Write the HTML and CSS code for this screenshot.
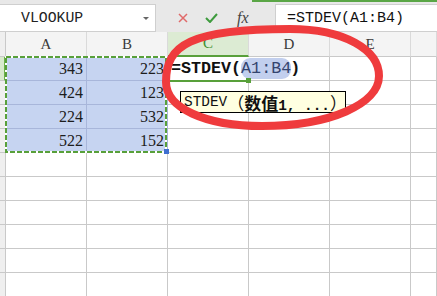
FILE: index.html
```html
<!DOCTYPE html>
<html>
<head>
<meta charset="utf-8">
<link rel="stylesheet" href="styles.css">
</head>
<body>
<div class="app">
  <div class="toolbar">
    <div class="tabline"></div>
    <div class="bar">
      <div class="namebox"><span>VLOOKUP</span><span class="caret"></span></div>
      <div class="actions">
        <svg class="ic-x" width="10" height="10" viewBox="0 0 10 10"><path d="M1 1 L9 9 M9 1 L1 9" stroke="#e06a6a" stroke-width="1.5" fill="none"/></svg>
        <svg class="ic-ok" width="13" height="10" viewBox="0 0 13 10"><path d="M1 5 L5 9 L12 1" stroke="#3e9b3e" stroke-width="2" fill="none"/></svg>
        <span class="fx">fx</span>
      </div>
      <div class="formula">=STDEV(A1:B4)</div>
    </div>
  </div>

  <div class="sheet">
    <div class="c corner"></div>
    <div class="c ch">A</div>
    <div class="c ch">B</div>
    <div class="c ch on">C</div>
    <div class="c ch">D</div>
    <div class="c ch">E</div>
    <div class="c ch"></div>

    <div class="c rh on"></div>
    <div class="c num sel">343</div>
    <div class="c num sel">223</div>
    <div class="c edit"><span class="fn">=STDEV(</span><span class="ref">A1:B4</span><span class="cursor"></span><span class="fn">)</span></div>
    <div class="c"></div>
    <div class="c"></div>
    <div class="c"></div>

    <div class="c rh"></div>
    <div class="c num sel">424</div>
    <div class="c num sel">123</div>
    <div class="c"></div>
    <div class="c"></div>
    <div class="c"></div>
    <div class="c"></div>

    <div class="c rh"></div>
    <div class="c num sel">224</div>
    <div class="c num sel">532</div>
    <div class="c"></div>
    <div class="c"></div>
    <div class="c"></div>
    <div class="c"></div>

    <div class="c rh"></div>
    <div class="c num sel">522</div>
    <div class="c num sel">152</div>
    <div class="c"></div>
    <div class="c"></div>
    <div class="c"></div>
    <div class="c"></div>

    <div class="c rh"></div><div class="c"></div><div class="c"></div><div class="c"></div><div class="c"></div><div class="c"></div><div class="c"></div>
    <div class="c rh"></div><div class="c"></div><div class="c"></div><div class="c"></div><div class="c"></div><div class="c"></div><div class="c"></div>
    <div class="c rh"></div><div class="c"></div><div class="c"></div><div class="c"></div><div class="c"></div><div class="c"></div><div class="c"></div>
    <div class="c rh"></div><div class="c"></div><div class="c"></div><div class="c"></div><div class="c"></div><div class="c"></div><div class="c"></div>
    <div class="c rh"></div><div class="c"></div><div class="c"></div><div class="c"></div><div class="c"></div><div class="c"></div><div class="c"></div>
    <div class="c rh"></div><div class="c"></div><div class="c"></div><div class="c"></div><div class="c"></div><div class="c"></div><div class="c"></div>
  </div>

  <svg class="overlay" width="437" height="296" viewBox="0 0 437 296">
    <rect x="6" y="57" width="160" height="95" fill="none" stroke="#ffffff" stroke-width="2"/>
    <rect x="6" y="57" width="160" height="95" fill="none" stroke="#58a03a" stroke-width="2" stroke-dasharray="5 2"/>
    <rect x="164" y="149" width="5" height="5" fill="#3f6fd1"/>
    <rect x="167" y="80" width="82" height="2" fill="#58a03a"/>
    <rect x="246" y="78" width="5" height="5" fill="#58a03a"/>
  </svg>

  <div class="tip">STDEV<span class="cjk">（</span><b><span class="cjk">数值</span>1, ...</b><span class="cjk">）</span></div>

  <svg class="overlay" width="437" height="296" viewBox="0 0 437 296">
    <path d="M166,82 C166,45 190,29 290,29 C345,29 379,50 379,76 C379,104 330,126 262,126 C205,126 166,108 166,82 Z" fill="none" stroke="#ef3b3d" stroke-width="8"/>
  </svg>
</div>
</body>
</html>
```

FILE: styles.css
```css
* { box-sizing: border-box; margin: 0; padding: 0; }
body {
  margin: 0;
  width: 437px;
  height: 296px;
  overflow: hidden;
  background: #fff;
  font-family: "Liberation Serif", serif;
}
.app {
  position: relative;
  width: 437px;
  height: 296px;
  overflow: hidden;
}

/* toolbar */
.toolbar { height: 32px; background: #e8e8e8; }
.tabline { height: 2px; margin-left: 252px; background: #5aa646; }
.bar { display: flex; margin-top: 2px; height: 28px; }
.namebox {
  width: 156px;
  height: 28px;
  background: #fff;
  border: 1px solid #cfcfcf;
  border-left: none;
  display: flex;
  align-items: center;
  padding-left: 21px;
  font: 14.8px "Liberation Mono", monospace;
  color: #222;
}
.caret {
  margin-left: auto;
  margin-right: 6px;
  width: 0;
  height: 0;
  border-left: 3px solid transparent;
  border-right: 3px solid transparent;
  border-top: 3px solid #666;
}
.actions {
  width: 119px;
  display: flex;
  align-items: center;
  padding-left: 22px;
}
.ic-ok { margin-left: 17px; }
.fx {
  margin-left: 19px;
  font: italic 16px "Liberation Serif", serif;
  color: #444;
}
.formula {
  flex: 1;
  background: #fff;
  border: 1px solid #cfcfcf;
  border-right: none;
  padding-left: 11px;
  display: flex;
  align-items: center;
  font: 15px "Liberation Mono", monospace;
  color: #111;
  white-space: nowrap;
}

/* sheet */
.sheet {
  display: grid;
  grid-template-columns: 6px repeat(5, 81px) 1fr;
  grid-template-rows: 25px repeat(10, 24px);
}
.c {
  border-right: 1px solid #c9c9c9;
  border-bottom: 1px solid #c9c9c9;
}
.corner { background: #efefef; }
.ch {
  background: #f4f4f4;
  border-right-color: #dadada;
  border-bottom-color: #c9c9c9;
  display: flex;
  align-items: center;
  justify-content: center;
  font-size: 15px;
  color: #3a3a3a;
}
.ch.on {
  background: #dcebd3;
  color: #3f8f2f;
  border-bottom: 2px solid #58a03a;
}
.rh { background: #efefef; }
.rh.on {
  background: #d8eacc;
  border-right: 2px solid #6cb04a;
}
.num {
  display: flex;
  align-items: center;
  justify-content: flex-end;
  padding-right: 3px;
  font-size: 16px;
  color: #1d1d1d;
}
.sel {
  background: #c6d4f1;
  border-color: #a8b6da;
}
.edit {
  border-right: none;
  display: flex;
  align-items: center;
  padding-left: 3px;
  white-space: nowrap;
  overflow: visible;
  font: bold 16.7px "Liberation Mono", monospace;
  color: #111;
}
.ref {
  background: #c2cfee;
  color: #33446f;
  font-weight: normal;
  border-radius: 9px;
  padding: 1px 0;
}
.cursor {
  display: inline-block;
  width: 1px;
  height: 19px;
  margin-right: -1px;
  background: #000;
}

/* overlays */
.overlay {
  position: absolute;
  left: 0;
  top: 0;
  pointer-events: none;
}
.tip {
  position: absolute;
  left: 180px;
  top: 91px;
  width: 166px;
  height: 22px;
  border: 1px solid #000;
  background: #ffffe1;
  display: flex;
  align-items: center;
  padding-left: 3px;
  white-space: nowrap;
  font: 14.4px "Liberation Mono", "Noto Sans CJK SC", monospace;
  color: #111;
}
.tip b { font-weight: bold; }
.cjk { font-family: "Noto Sans CJK SC", sans-serif; font-size: 17px; }
```
